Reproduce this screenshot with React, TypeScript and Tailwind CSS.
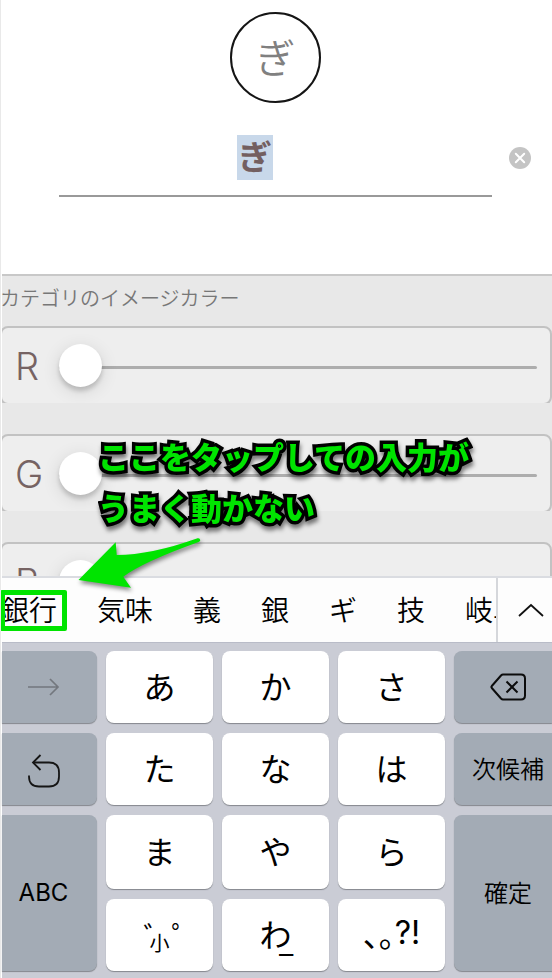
import React, { useState } from "react";
import classNames from "clsx";

interface KeyProps {
  label: string;
  dark?: boolean;
  className?: string;
  children: React.ReactNode;
}

const channels = ["R", "G", "B"];

const candidates = ["銀行", "気味", "義", "銀", "ギ", "技", "岐阜"];

function Key({ label, dark, className, children }: KeyProps) {
  return (
    <button
      aria-label={label}
      className={classNames(
        "flex items-center justify-center whitespace-nowrap text-black shadow-[0_1px_1px_#84878d]",
        dark
          ? "bg-[#a3abb5]"
          : "rounded-lg bg-white pb-1 text-[32px] leading-10",
        className
      )}
    >
      {children}
    </button>
  );
}

function ColorSlider({ channel }: { channel: string }) {
  const [value, setValue] = useState(0);
  return (
    <div className="h-[77px] shrink-0 overflow-hidden">
      <label className="-ml-0.5 flex h-[79px] items-center rounded-lg border-2 border-[#c2c2c2] bg-[#eeeeee] pr-[13px] pl-[13px] text-[#766363]">
        <span className="w-11 font-[Inter] text-[38px] leading-none font-light">
          {channel}
        </span>
        <input
          type="range"
          min={0}
          max={255}
          value={value}
          onChange={(e) => setValue(Number(e.target.value))}
          className="mt-1 h-11 min-w-0 flex-1 appearance-none bg-transparent [&::-webkit-slider-runnable-track]:h-[3px] [&::-webkit-slider-runnable-track]:rounded-full [&::-webkit-slider-runnable-track]:bg-[#adadad] [&::-webkit-slider-thumb]:-mt-[22px] [&::-webkit-slider-thumb]:size-[43px] [&::-webkit-slider-thumb]:appearance-none [&::-webkit-slider-thumb]:rounded-full [&::-webkit-slider-thumb]:bg-white [&::-webkit-slider-thumb]:shadow-[0_4px_4px_rgba(0,0,0,0.16),0_4px_18px_rgba(0,0,0,0.12)]"
        />
      </label>
    </div>
  );
}

function CategoryHeader() {
  const [name, setName] = useState("ぎ");
  return (
    <header className="h-[274px] bg-white pt-3">
      <div className="flex justify-center pr-[3px]">
        <div className="flex size-[91px] items-center justify-center rounded-full border-2 border-[#151515] pb-1 text-[40px] leading-none font-[350] text-[#808080]">
          {name}
        </div>
      </div>
      <div className="mt-8 flex items-start pl-[57px]">
        <div className="flex flex-1 justify-center border-b-2 border-[#999999] pr-[41px] pb-[15px]">
          <input
            aria-label="カテゴリ名"
            value={name}
            onChange={(e) => setName(e.target.value)}
            className="h-[45px] w-9 bg-[#c8d8ea] pb-1 text-center text-[34px] leading-none font-bold text-[#735f60] outline-none"
          />
        </div>
        <button
          aria-label="クリア"
          onClick={() => setName("")}
          className="flex h-[45px] w-[60px] items-center justify-center pr-[5px]"
        >
          <svg viewBox="0 0 22 22" className="size-[22px]">
            <circle cx="11" cy="11" r="11" fill="#c4c4c4" />
            <path
              d="M6.8 6.8l8.4 8.4M15.2 6.8l-8.4 8.4"
              stroke="white"
              strokeWidth="2"
              strokeLinecap="round"
            />
          </svg>
        </button>
      </div>
    </header>
  );
}

function CandidateBar() {
  return (
    <div className="flex h-[66px] border-t-2 border-[#dadce1] bg-[#fdfdfd] text-black">
      <div className="-ml-px flex min-w-0 flex-1 items-center gap-10 overflow-hidden text-[28px] leading-8 font-[350]">
        {candidates.map((word) => (
          <button key={word} className="shrink-0 pb-[3px]">
            {word}
          </button>
        ))}
      </div>
      <button
        aria-label="候補を開く"
        className="flex w-14 items-center justify-center border-l-2 border-[#d5d7db] pl-3"
      >
        <svg viewBox="0 0 26 14" className="h-3.5 w-[26px]" fill="none">
          <path d="M1 13L13 2L25 13" stroke="#111" strokeWidth="1.8" />
        </svg>
      </button>
    </div>
  );
}

function Keyboard() {
  return (
    <div className="grid grid-cols-[95fr_107fr_107fr_107fr_98fr] grid-rows-[72px_72px_74px_72px] gap-x-[9px] gap-y-2.5 border-t border-[#b9bcc8] bg-[#caccd5] pt-2 pb-[7px]">
      <Key label="次へ" dark className="rounded-r-lg pr-3">
        <svg viewBox="0 0 32 18" className="h-[18px] w-8" fill="none">
          <path d="M0 9H30M22 1L30 9L22 17" stroke="#73777e" strokeWidth="1.7" />
        </svg>
      </Key>
      <Key label="あ">あ</Key>
      <Key label="か">か</Key>
      <Key label="さ">さ</Key>
      <Key label="削除" dark className="rounded-l-lg pl-2.5">
        <svg
          viewBox="0 0 36 28"
          className="h-7 w-9"
          fill="none"
          stroke="#0c0c0c"
          strokeWidth="2"
          strokeLinejoin="round"
        >
          <path d="M13 1.5H31Q35 1.5 35 5.5V22.5Q35 26.5 31 26.5H13Q12 26.5 11 25.5L1.8 15Q1 14 1.8 13L11 2.5Q12 1.5 13 1.5Z" />
          <path d="M16.5 8.5L27.5 19.5M27.5 8.5L16.5 19.5" />
        </svg>
      </Key>

      <Key label="逆順" dark className="rounded-r-lg pr-3">
        <svg
          viewBox="0 0 32 34"
          className="mt-1 h-[34px] w-8"
          fill="none"
          stroke="#151515"
          strokeWidth="1.8"
        >
          <path d="M12.5 1L5 8.5L12.5 16" />
          <path d="M5 8.5H21Q31 8.5 31 18.5V22.5Q31 32.5 21 32.5H11Q1 32.5 1 22.5V21.5" />
        </svg>
      </Key>
      <Key label="た">た</Key>
      <Key label="な">な</Key>
      <Key label="は">は</Key>
      <Key
        label="次候補"
        dark
        className="rounded-l-lg pb-0.5 pl-2.5 text-2xl font-[350]"
      >
        次候補
      </Key>

      <Key
        label="ABC"
        dark
        className="row-span-2 rounded-r-lg pr-3 font-[Inter] text-2xl"
      >
        ABC
      </Key>
      <Key label="ま">ま</Key>
      <Key label="や">や</Key>
      <Key label="ら">ら</Key>
      <Key
        label="確定"
        dark
        className="row-span-2 rounded-l-lg pb-0.5 pl-2.5 text-2xl font-[350]"
      >
        確定
      </Key>

      <Key label="濁点・半濁点・小文字" className="flex-col">
        <span className="mt-2 ml-6 h-3 text-[28px] leading-9">゛゜</span>
        <span className="text-xl leading-7">小</span>
      </Key>
      <Key label="わ" className="relative">
        わ
        <span className="absolute bottom-3 left-[57px] font-[Inter] leading-8 font-light">
          _
        </span>
      </Key>
      <Key label="句読点">
        <span className="[font-feature-settings:'halt']">、。</span>
        <span className="font-[Inter]">?!</span>
      </Key>
    </div>
  );
}

// callout drawn over the screen, points at the first candidate
function Callout() {
  return (
    <div className="pointer-events-none absolute top-[430px] -left-px">
      <p className="pl-[98px] text-[31px] leading-[51px] font-black whitespace-nowrap text-[#00e400] drop-shadow-[1px_4px_2px_rgba(0,0,0,0.5)] [-webkit-text-stroke:7px_black] [paint-order:stroke_fill]">
        ここをタップしての入力が
        <br />
        うまく動かない
      </p>
      <svg
        viewBox="0 0 124 54"
        className="mt-1 ml-[78px] h-[54px] w-[124px] overflow-visible drop-shadow-[1px_3px_2px_rgba(0,0,0,0.45)]"
      >
        <path
          d="M0.5 44L37.7 6.3L38.7 19Q73 19 119.5 2.3Q122 1.8 122.3 4.2Q122 5.5 120 6.3Q65 26 45.3 40.7L53 51.7Z"
          fill="#00e400"
        />
      </svg>
      <div className="h-[41px] w-[67px] rounded-xs border-5 border-[#00e400]" />
    </div>
  );
}

export default function App() {
  return (
    <main
      lang="ja"
      className="relative overflow-hidden border-l border-[#e9e9e9] bg-white pl-px font-['Noto_Sans_CJK_JP',sans-serif]"
    >
      <CategoryHeader />
      <section className="border-t-2 border-[#c8c8c8] bg-[#e8e8e8]">
        <h2 className="mb-1.5 -ml-0.5 flex h-11 items-center text-xl font-[350] text-[#777777]">
          カテゴリのイメージカラー
        </h2>
        <div className="flex h-[250px] flex-col gap-[31px] overflow-hidden">
          {channels.map((channel) => (
            <ColorSlider key={channel} channel={channel} />
          ))}
        </div>
      </section>
      <CandidateBar />
      <Keyboard />
      <Callout />
    </main>
  );
}
